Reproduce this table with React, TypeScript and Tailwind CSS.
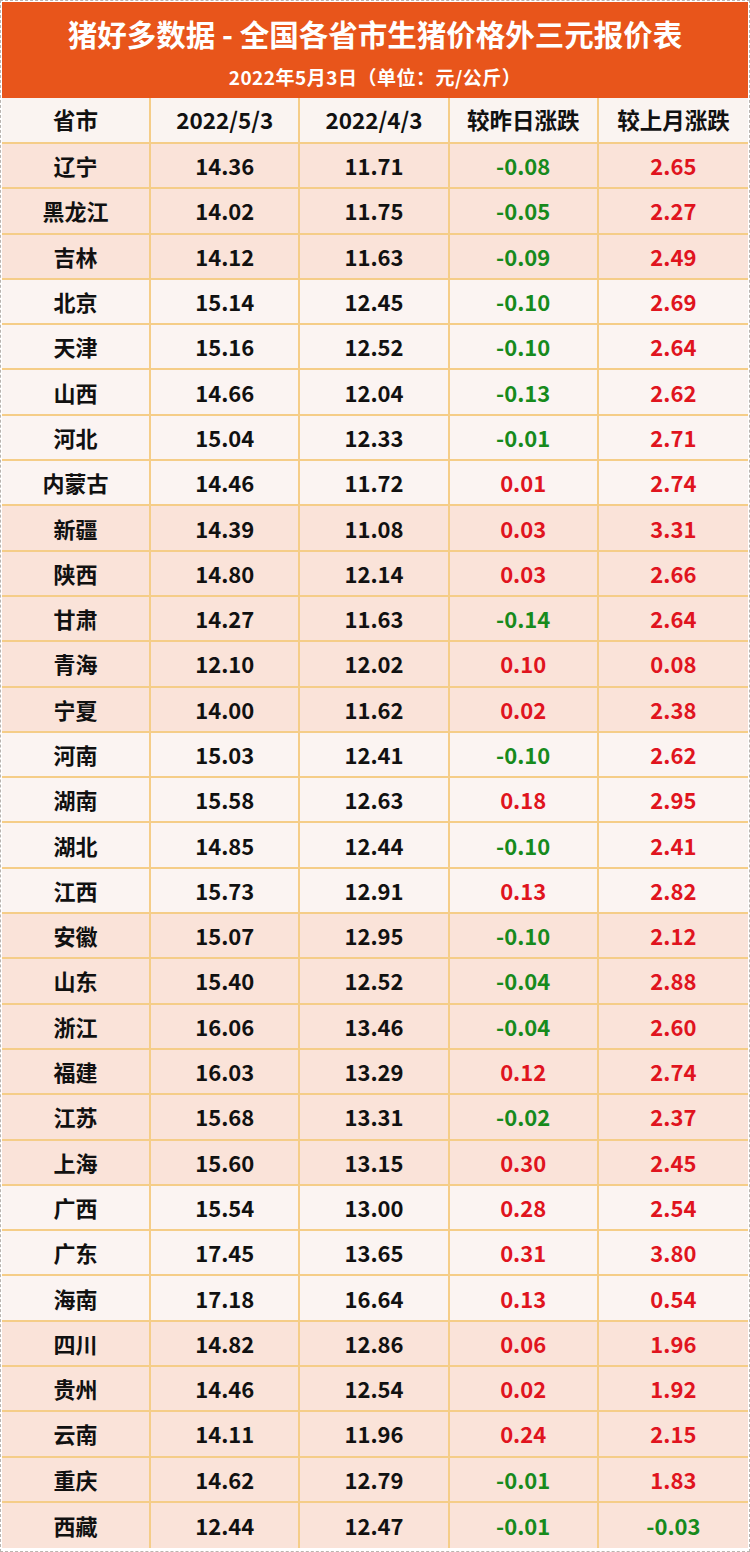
import React from "react";

type Row = [string, string, string, string, string, boolean];

// [省市, 5/3, 4/3, 较昨日, 较上月, pink]
const ROWS: Row[] = [
  ["辽宁", "14.36", "11.71", "-0.08", "2.65", true],
  ["黑龙江", "14.02", "11.75", "-0.05", "2.27", true],
  ["吉林", "14.12", "11.63", "-0.09", "2.49", true],
  ["北京", "15.14", "12.45", "-0.10", "2.69", false],
  ["天津", "15.16", "12.52", "-0.10", "2.64", false],
  ["山西", "14.66", "12.04", "-0.13", "2.62", false],
  ["河北", "15.04", "12.33", "-0.01", "2.71", false],
  ["内蒙古", "14.46", "11.72", "0.01", "2.74", false],
  ["新疆", "14.39", "11.08", "0.03", "3.31", true],
  ["陕西", "14.80", "12.14", "0.03", "2.66", true],
  ["甘肃", "14.27", "11.63", "-0.14", "2.64", true],
  ["青海", "12.10", "12.02", "0.10", "0.08", true],
  ["宁夏", "14.00", "11.62", "0.02", "2.38", true],
  ["河南", "15.03", "12.41", "-0.10", "2.62", false],
  ["湖南", "15.58", "12.63", "0.18", "2.95", false],
  ["湖北", "14.85", "12.44", "-0.10", "2.41", false],
  ["江西", "15.73", "12.91", "0.13", "2.82", false],
  ["安徽", "15.07", "12.95", "-0.10", "2.12", true],
  ["山东", "15.40", "12.52", "-0.04", "2.88", true],
  ["浙江", "16.06", "13.46", "-0.04", "2.60", true],
  ["福建", "16.03", "13.29", "0.12", "2.74", true],
  ["江苏", "15.68", "13.31", "-0.02", "2.37", true],
  ["上海", "15.60", "13.15", "0.30", "2.45", true],
  ["广西", "15.54", "13.00", "0.28", "2.54", false],
  ["广东", "17.45", "13.65", "0.31", "3.80", false],
  ["海南", "17.18", "16.64", "0.13", "0.54", false],
  ["四川", "14.82", "12.86", "0.06", "1.96", true],
  ["贵州", "14.46", "12.54", "0.02", "1.92", true],
  ["云南", "14.11", "11.96", "0.24", "2.15", true],
  ["重庆", "14.62", "12.79", "-0.01", "1.83", true],
  ["西藏", "12.44", "12.47", "-0.01", "-0.03", true],
];

const HEAD = ["省市", "2022/5/3", "2022/4/3", "较昨日涨跌", "较上月涨跌"];

function Change({ v }: { v: string }) {
  const down = v.startsWith("-");
  return <span className={down ? "text-[#178a1c]" : "text-[#e0141e]"}>{v}</span>;
}

export default function App() {
  return (
    <div
      className="w-[750px] h-[1552px] border border-dashed border-[#b9b4b0] bg-white p-px flex flex-col"
      style={{ fontFamily: '"Noto Sans CJK SC", "Noto Sans", sans-serif' }}
    >
      <div className="h-[96px] bg-[#e8551b] text-white font-bold flex flex-col items-center">
        <div className="mt-[11px] text-[29.5px] leading-[40px]">猪好多数据 - 全国各省市生猪价格外三元报价表</div>
        <div className="mt-[11px] text-[19px] leading-[26px] tracking-[0.5px]">2022年5月3日（单位：元/公斤）</div>
      </div>

      <div className="grid grid-cols-5 h-[46px] bg-[#faf4f1] border-b-2 border-[#f5cd88] text-[22.5px] font-bold text-[#111]">
        {HEAD.map((h, i) => (
          <div
            key={h}
            className={`flex items-center justify-center ${i < 4 ? "border-r-2 border-[#f5cd88]" : ""}`}
          >
            {h}
          </div>
        ))}
      </div>

      {ROWS.map(([name, a, b, d, m, pink]) => (
        <div
          key={name}
          className={`grid grid-cols-5 h-[45.3px] border-b-2 border-[#f5cd88] text-[22px] font-bold text-[#111] last:border-b-0 ${
            pink ? "bg-[#fae3d9]" : "bg-[#fbf4f2]"
          }`}
        >
          <div className="flex items-center justify-center border-r-2 border-[#f5cd88]">{name}</div>
          <div className="flex items-center justify-center border-r-2 border-[#f5cd88]">{a}</div>
          <div className="flex items-center justify-center border-r-2 border-[#f5cd88]">{b}</div>
          <div className="flex items-center justify-center border-r-2 border-[#f5cd88]">
            <Change v={d} />
          </div>
          <div className="flex items-center justify-center">
            <Change v={m} />
          </div>
        </div>
      ))}
    </div>
  );
}
